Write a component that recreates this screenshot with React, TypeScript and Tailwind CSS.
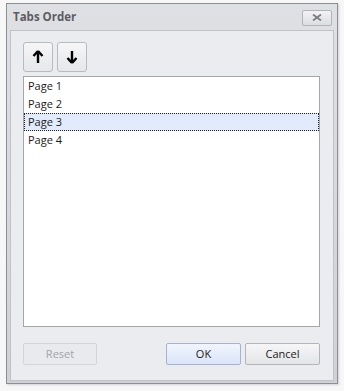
import React from "react";

const font = { fontFamily: '"Open Sans", "Noto Sans", sans-serif' };

function ArrowUp() {
  return (
    <svg width="12" height="14" viewBox="0 0 12 14">
      <path d="M6 1 L1.5 6 M6 1 L10.5 6 M6 1 V13" stroke="#000" strokeWidth="2.4" fill="none" strokeLinecap="butt" />
    </svg>
  );
}
function ArrowDown() {
  return (
    <svg width="12" height="14" viewBox="0 0 12 14">
      <path d="M6 13 L1.5 8 M6 13 L10.5 8 M6 13 V1" stroke="#000" strokeWidth="2.4" fill="none" strokeLinecap="butt" />
    </svg>
  );
}

export default function App() {
  const items = ["Page 1", "Page 2", "Page 3", "Page 4"];
  return (
    <div className="w-[344px] h-[391px] bg-[#f7f7f8] pl-[6px] pt-[3px]" style={font}>
      <div className="w-[332px] h-[381px] border border-[#8e8f93] bg-gradient-to-b from-[#dfe0e4] to-[#d0d1d6] flex flex-col px-[3px] pb-[2px] shadow-[1px_1px_2px_rgba(0,0,0,0.15)]">
        <div className="h-[26px] flex items-center justify-between pl-[3px] pr-[2px]">
          <span className="text-[11.5px] font-bold text-[#5c5d62]">Tabs Order</span>
          <div className="w-[30px] h-[16px] mt-[1px] rounded-[2px] border border-[#b3b4b8] bg-gradient-to-b from-[#f3f3f5] to-[#dcdde1] flex items-center justify-center">
            <svg width="10" height="7" viewBox="0 0 10 7">
              <path d="M1 0.5 L9 6.5 M9 0.5 L1 6.5" stroke="#7d7e83" strokeWidth="1.8" />
            </svg>
          </div>
        </div>
        <div className="flex-1 border border-[#c1c2c7] bg-[#ebecef] flex flex-col pl-[12px] pr-[13px] pt-[11px] pb-[14px]">
          <div className="flex gap-[4px]">
            <div className="w-[30px] h-[30px] rounded-[3px] border border-[#b9babe] bg-gradient-to-b from-[#f6f6f7] to-[#e6e7ea] flex items-center justify-center">
              <ArrowUp />
            </div>
            <div className="w-[30px] h-[30px] rounded-[3px] border border-[#b9babe] bg-gradient-to-b from-[#f6f6f7] to-[#e6e7ea] flex items-center justify-center">
              <ArrowDown />
            </div>
          </div>
          <div className="mt-[4px] h-[251px] border border-[#a5a6aa] bg-white flex flex-col">
            {items.map((it, i) => (
              <div
                key={it}
                className={
                  i === 2
                    ? "h-[18px] flex items-center pl-[3px] text-[11px] text-[#1a1a1a] bg-[#e2ebfb] border border-dotted border-[#222]"
                    : "h-[18px] flex items-center pl-[4px] text-[11px] text-[#1a1a1a]"
                }
              >
                {it}
              </div>
            ))}
          </div>
          <div className="mt-[16px] flex items-center">
            <div className="w-[74px] h-[22px] rounded-[2px] border border-[#d3d4d8] bg-[#e9eaed] flex items-center justify-center text-[11px] text-[#a2a3a7]">
              Reset
            </div>
            <div className="flex-1" />
            <div className="w-[75px] h-[22px] rounded-[2px] border border-[#a7b3cd] bg-gradient-to-b from-[#f1f5fd] to-[#dbe5f9] flex items-center justify-center text-[11px] text-[#1a1a1a]">
              OK
            </div>
            <div className="ml-[4px] w-[75px] h-[22px] rounded-[2px] border border-[#b4b5b9] bg-gradient-to-b from-[#f6f6f7] to-[#e4e5e8] flex items-center justify-center text-[11px] text-[#1a1a1a]">
              Cancel
            </div>
          </div>
        </div>
      </div>
    </div>
  );
}
